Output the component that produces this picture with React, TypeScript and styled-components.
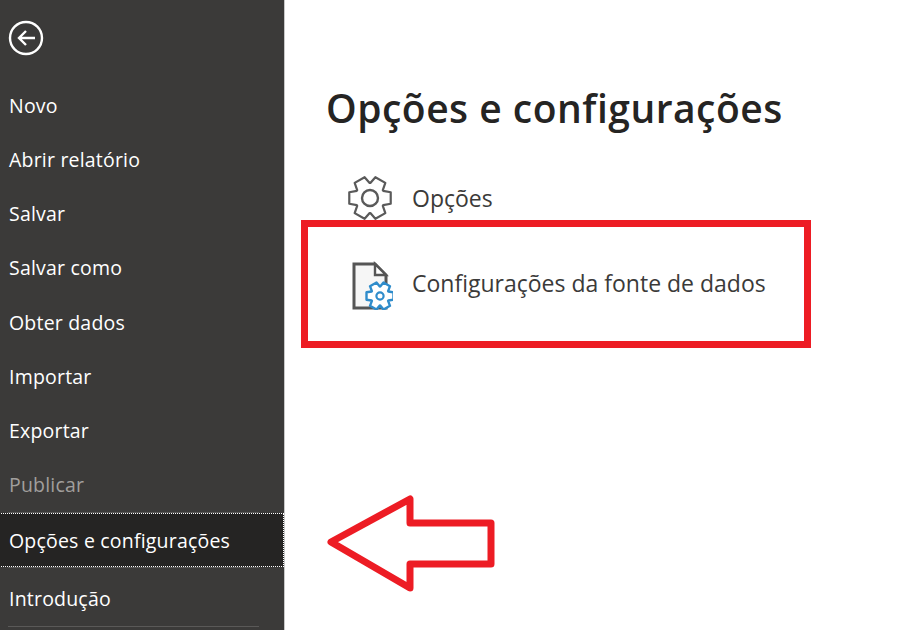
import styled, { createGlobalStyle } from 'styled-components';

const GlobalStyle = createGlobalStyle`
  html, body {
    margin: 0;
    padding: 0;
    background: #fff;
  }
  body {
    font-family: 'Open Sans', 'Noto Sans', 'Liberation Sans', sans-serif;
  }
`;

const Page = styled.div`
  position: relative;
  display: flex;
  width: 911px;
  height: 630px;
  overflow: hidden;
  background: #fff;
`;

const Sidebar = styled.nav`
  width: 284px;
  flex-shrink: 0;
  background: #3b3a39;
  border-right: 1px solid #c8c8c8;
  display: flex;
  flex-direction: column;
`;

const BackButton = styled.button`
  display: flex;
  width: 36px;
  height: 36px;
  margin: 20px 0 23px 8px;
  padding: 0;
  border: none;
  background: none;
  color: #fff;
`;

const NavItem = styled.div<{ $selected?: boolean; $disabled?: boolean }>`
  height: 54.14px;
  flex-shrink: 0;
  display: flex;
  align-items: center;
  padding-left: ${({ $selected }) => ($selected ? 11 : 9)}px;
  margin-left: ${({ $selected }) => ($selected ? -2 : 0)}px;
  padding-top: ${({ $selected }) => ($selected ? 1 : 0)}px;
  padding-bottom: ${({ $selected }) => ($selected ? 0 : 1)}px;
  box-sizing: border-box;
  font-size: 19.5px;
  letter-spacing: 0.2px;
  color: ${({ $disabled }) => ($disabled ? '#a19f9d' : '#fff')};
  background: ${({ $selected }) => ($selected ? '#252423' : 'transparent')};
  outline: ${({ $selected }) => ($selected ? '1px dotted #fff' : 'none')};
  outline-offset: -1px;
`;

const Divider = styled.div<{ $gap?: number }>`
  height: 1px;
  width: 251px;
  flex-shrink: 0;
  margin: 0 0 ${({ $gap }) => $gap ?? 0}px 8px;
  background: #5a5958;
`;

const Main = styled.main`
  flex: 1;
  padding: 80px 0 0 41px;
`;

const Title = styled.h1`
  margin: 0 0 37px;
  font-size: 39px;
  line-height: 56px;
  font-weight: 600;
  color: #252423;
  letter-spacing: 0.5px;
`;

const OptionRow = styled.div<{ $height: number }>`
  display: flex;
  align-items: center;
  gap: 19px;
  height: ${({ $height }) => $height}px;
  padding-left: 21px;
  font-size: 23px;
  color: #3b3a39;
`;

const IconSlot = styled.div`
  width: 46px;
  height: 46px;
  flex-shrink: 0;
  display: flex;
`;

const Highlight = styled.div`
  position: absolute;
  left: 301px;
  top: 220px;
  width: 510px;
  height: 128px;
  box-sizing: border-box;
  border: 7px solid #ed1c24;
`;

const ArrowMark = styled.svg`
  position: absolute;
  left: 320px;
  top: 490px;
`;

// engrenagem gerada por pontos, 6 dentes com o primeiro em 0 graus
const gearPath = (cx: number, cy: number, outer: number, inner: number) => {
  const pts: string[] = [];
  for (let i = 0; i < 6; i++) {
    const a = (i * Math.PI) / 3;
    const steps: [number, number][] = [
      [-0.5, inner],
      [-0.27, outer],
      [0.27, outer],
      [0.5, inner],
    ];
    steps.forEach(([d, r]) => {
      pts.push(`${(cx + Math.cos(a + d) * r).toFixed(2)} ${(cy + Math.sin(a + d) * r).toFixed(2)}`);
    });
  }
  return `M${pts.join('L')}Z`;
};

const BackIcon = () => (
  <svg width="36" height="36" viewBox="0 0 36 36" fill="none" stroke="currentColor">
    <circle cx="18" cy="18" r="16" strokeWidth="2.4" />
    <path d="M27 18H11M18 11l-7 7 7 7" strokeWidth="2.4" />
  </svg>
);

const GearIcon = () => (
  <svg width="46" height="46" viewBox="0 0 46 46" fill="none" stroke="#5a5a5a">
    <path d={gearPath(23, 23, 21.5, 15)} strokeWidth="2.2" strokeLinejoin="round" />
    <circle cx="23" cy="23" r="8" strokeWidth="2.4" />
  </svg>
);

const SourceIcon = () => (
  <svg width="46" height="50" viewBox="0 0 46 50" fill="none">
    <path d="M7 4H28L39 15V48H7Z" fill="#f6f6f6" stroke="#555" strokeWidth="3" />
    <path d="M28 4V15H39Z" fill="#fff" stroke="#555" strokeWidth="2.4" />
    <path d={gearPath(33, 36, 14, 9.5)} fill="#fff" stroke="#2f8ccb" strokeWidth="2.4" strokeLinejoin="round" />
    <circle cx="33" cy="36" r="3.6" stroke="#2f8ccb" strokeWidth="2.2" />
  </svg>
);

export default function App() {
  return (
    <Page>
      <GlobalStyle />
      <Sidebar>
        <BackButton>
          <BackIcon />
        </BackButton>
        <NavItem>Novo</NavItem>
        <NavItem>Abrir relatório</NavItem>
        <NavItem>Salvar</NavItem>
        <NavItem>Salvar como</NavItem>
        <NavItem>Obter dados</NavItem>
        <NavItem>Importar</NavItem>
        <NavItem>Exportar</NavItem>
        <NavItem $disabled>Publicar</NavItem>
        <Divider />
        <NavItem $selected>Opções e configurações</NavItem>
        <Divider $gap={4} />
        <NavItem>Introdução</NavItem>
        <Divider />
      </Sidebar>
      <Main>
        <Title>Opções e configurações</Title>
        <OptionRow $height={50}>
          <IconSlot>
            <GearIcon />
          </IconSlot>
          Opções
        </OptionRow>
        <OptionRow $height={120}>
          <IconSlot>
            <SourceIcon />
          </IconSlot>
          Configurações da fonte de dados
        </OptionRow>
      </Main>
      <Highlight />
      <ArrowMark width="180" height="105" viewBox="0 0 180 105" fill="#fff" stroke="#ed1c24">
        <path d="M11 52L90 9V33H171V74H90V98Z" strokeWidth="7" strokeLinejoin="round" />
      </ArrowMark>
    </Page>
  );
}
